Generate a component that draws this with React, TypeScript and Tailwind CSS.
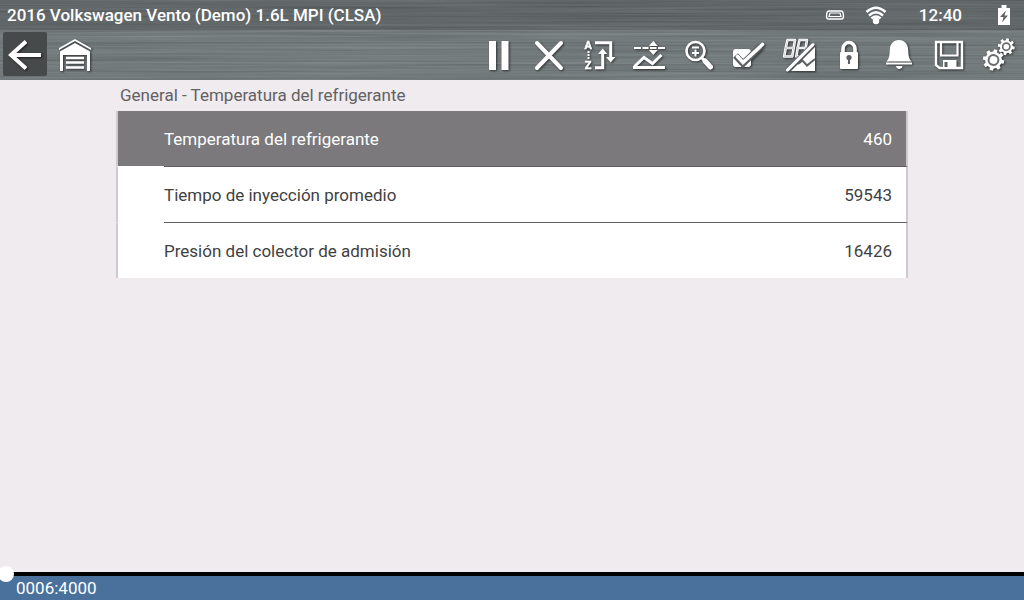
import React, { useState } from 'react';

interface IconButtonProps {
  label: string;
  active?: boolean;
  children: React.ReactNode;
}

interface Parameter {
  id: string;
  name: string;
  value: number;
}

const parameters: Parameter[] = [
  { id: 'coolant', name: 'Temperatura del refrigerante', value: 460 },
  { id: 'injection', name: 'Tiempo de inyección promedio', value: 59543 },
  { id: 'manifold', name: 'Presión del colector de admisión', value: 16426 },
];

const SEGMENTS = 'M13.5 10h7.500l-1.300 8h-8zM11.700 18h8L18.200 26.500h-8zM25.500 10h7.500l-1.300 8h-8zM23.700 18L22.300 26.500h3M31.700 18l-.5 3';

const IconButton: React.FC<IconButtonProps> = ({ label, active, children }) => (
  <button type="button" aria-label={label} className="relative flex size-[50px] items-center justify-center">
    {active && <span className="absolute top-0.5 left-[3px] size-11 rounded-xs bg-[#464a4b]" />}
    <svg
      viewBox="0 0 50 50"
      fill="none"
      stroke="none"
      className="relative size-[50px] text-white drop-shadow-[1px_1px_1px_rgba(0,0,0,0.6)]"
    >
      {children}
    </svg>
  </button>
);

// Brushed metal, stretched behind both header bars
const BrushedMetal: React.FC = () => (
  <svg className="absolute inset-0 size-full" preserveAspectRatio="none" aria-hidden="true">
    <filter id="brushed" x="0" y="0" width="100%" height="100%" colorInterpolationFilters="sRGB">
      <feTurbulence type="fractalNoise" baseFrequency="0.004 0.45" numOctaves="3" seed="8" />
      <feColorMatrix values="0.5 0 0 0 0.215  0.5 0 0 0 0.24  0.5 0 0 0 0.25  0 0 0 0 1" />
    </filter>
    <rect width="100%" height="100%" filter="url(#brushed)" opacity="0.3" />
  </svg>
);

// Toothed wheel around the origin
const gearPath = (outer: number, inner: number, teeth: number) => {
  const points: string[] = [];
  for (let i = 0; i < teeth; i++) {
    const step = (Math.PI * 2) / teeth;
    const a = i * step;
    [[-0.3, inner], [-0.2, outer], [0.2, outer], [0.3, inner]].forEach(([f, r]) => {
      points.push(`${(Math.cos(a + f * step) * r).toFixed(2)} ${(Math.sin(a + f * step) * r).toFixed(2)}`);
    });
  }
  return `M${points.join('L')}Z`;
};

const App: React.FC = () => {
  const [selected, setSelected] = useState('coolant');
  const [frame, setFrame] = useState(0);

  return (
    <div className="flex min-h-screen flex-col overflow-hidden bg-[#efebef] font-['Roboto',sans-serif] text-[17px] leading-7">
      <header className="relative bg-[#72797b] text-white">
        <BrushedMetal />

        {/* --- Status Bar --- */}
        <div className="relative flex h-[30px] items-center justify-between bg-black/15 pr-3.5 pl-[7px]">
          <h1 className="font-medium">2016 Volkswagen Vento (Demo) 1.6L MPI (CLSA)</h1>
          <div className="flex items-center">
            <svg viewBox="0 0 20 10" className="mr-5 h-2.5 w-5" fill="none" stroke="currentColor">
              <path d="M4 1h12q1.500 0 2 1.500l.5 3.500q0 3-2 3h-13q-2 0-2-3l.5-3.500Q2.500 1 4 1z" strokeWidth="1.400" />
              <path d="M5 3h10l1 3.500H4z" strokeWidth="1.200" />
            </svg>
            <svg viewBox="0 0 22 20" className="mr-8 h-5 w-[22px]" fill="none" stroke="currentColor" strokeWidth="2.400">
              <path d="M1.500 7Q11-1.500 20.500 7M4 10.500Q11 4 18 10.500M6.500 13.500Q11 9.500 15.500 13.500" />
              <circle cx="11" cy="16" r="3.200" fill="currentColor" stroke="none" />
            </svg>
            <time className="mr-9 font-medium">12:40</time>
            <svg viewBox="0 0 12 20" className="h-5 w-3">
              <path d="M3.500 0h5v3H12v17H0V3h3.500z" fill="currentColor" />
              <path d="M8 5.500L2 12h3.500L4 17.500 10 10.500H6.500z" fill="#5f6466" />
            </svg>
          </div>
        </div>

        {/* --- Toolbar --- */}
        <nav className="relative flex h-[50px] justify-between">
          <div className="flex">
            <IconButton label="Atrás" active>
              <path d="M26 11.500L11 25l15 13.500M11 25h30" stroke="currentColor" strokeWidth="4" />
            </IconButton>
            <IconButton label="Inicio">
              <path d="M9 20v-2l16-9 16 9v2l-16-9z" fill="currentColor" />
              <path d="M10 41V21.500L25 13l15 8.500V41h-3V25H13v16z" fill="currentColor" />
              <path d="M16 28h18M16 32.500h18M16 37.500h18" stroke="currentColor" strokeWidth="2.300" />
            </IconButton>
          </div>

          <div className="flex">
            <IconButton label="Pausa">
              <path d="M15 11h7v29h-7zM27.500 11h7v29h-7z" fill="currentColor" />
            </IconButton>
            <IconButton label="Borrar">
              <path d="M13 13l24 25M37 13L13 38" stroke="currentColor" strokeWidth="4" strokeLinecap="round" />
            </IconButton>
            <IconButton label="Ordenar">
              <g fill="currentColor" stroke="currentColor" strokeWidth="0.400" fontSize="11" fontWeight="700">
                <text x="10.500" y="19">A</text>
                <text x="10.800" y="39">Z</text>
              </g>
              <path d="M13.500 21h2v2h-2zM13.500 24h2v2h-2zM13.500 27h2v2h-2z" fill="currentColor" />
              <path d="M21 12.700h15.700V29M21 37.800h7.700V22" stroke="currentColor" strokeWidth="3" />
              <path d="M32 27h9.400l-4.700 5.500zM24 24h9.400l-4.700-5.500z" fill="currentColor" />
            </IconButton>
            <IconButton label="Escala">
              <path d="M10 18h7M18.500 18h6M34 18h7M26 18h6.500" stroke="currentColor" strokeWidth="2" />
              <path d="M29.300 11l4.500 5H25zM25 20h8.800l-4.500 5z" fill="currentColor" />
              <path d="M10.500 36.500L20 27.500l8.500 6L37.500 25" stroke="currentColor" strokeWidth="3" />
              <path d="M9 36h32v3H9z" fill="currentColor" />
            </IconButton>
            <IconButton label="Zoom">
              <circle cx="21.500" cy="21" r="9" stroke="currentColor" strokeWidth="2.600" />
              <path d="M18 17.500h7M18 23h7M21.500 19.500v7" stroke="currentColor" strokeWidth="2" />
              <path d="M28 28l3 3" stroke="currentColor" strokeWidth="3" />
              <path d="M31 31l5.500 6" stroke="currentColor" strokeWidth="5" strokeLinecap="round" />
            </IconButton>
            <IconButton label="Seleccionar">
              <rect x="9" y="19" width="18" height="18" rx="3" fill="currentColor" />
              <path d="M11.500 25.500l7.500 8L37 16" stroke="#5b6062" strokeWidth="6.500" />
              <path d="M13.500 26.500l5.500 6L38.500 14.500" stroke="currentColor" strokeWidth="3.600" strokeLinecap="round" />
            </IconButton>
            <IconButton label="Vista">
              <path d={SEGMENTS} stroke="currentColor" strokeWidth="2.600" strokeLinejoin="round" />
              <path d={SEGMENTS} stroke="#9a9ea0" strokeWidth="0.400" />
              <path d="M41 17v24H17z" fill="currentColor" />
              <path d="M24 34l4.500-3.500 4.500 5 8-6.500" stroke="#5b6062" strokeWidth="2" />
              <path d="M14 39.500L39 14.500" stroke="#676d70" strokeWidth="5" />
              <path d="M13.500 40L39 14.500" stroke="currentColor" strokeWidth="3" strokeLinecap="round" />
            </IconButton>
            <IconButton label="Bloquear">
              <path d="M19 24v-5a6 6.500 0 0 1 12 0v5" stroke="currentColor" strokeWidth="3.600" />
              <rect x="16" y="22" width="18" height="17" rx="1" fill="currentColor" />
              <circle cx="25" cy="27.500" r="2.600" fill="#5b6062" />
              <path d="M24 28h2v6h-2z" fill="#5b6062" />
            </IconButton>
            <IconButton label="Alarma">
              <path d="M25 10c6 0 9 4.500 9.200 10 .2 6 .8 9 3.300 11.500h-25c2.500-2.500 3.100-5.500 3.300-11.500C16 14.500 19 10 25 10z" fill="currentColor" />
              <path d="M12 32.500h26v2H12zM22 36h6.500q-.5 3-3.250 3T22 36z" fill="currentColor" />
            </IconButton>
            <IconButton label="Guardar">
              <path d="M12 12h26v26H15.500L12 35z" stroke="currentColor" strokeWidth="2.400" />
              <path d="M17 12v13.500h16.500V12" stroke="currentColor" strokeWidth="2.200" />
              <path d="M19 30h13.500v8H19z" fill="currentColor" />
              <path d="M20.500 32h3v5h-3z" fill="#5b6062" />
            </IconButton>
            <IconButton label="Configuración">
              <g transform="translate(19.500 30) rotate(12)">
                <path d={gearPath(10.8, 8.4, 8)} fill="currentColor" />
                <circle r="4.900" stroke="#676d70" strokeWidth="2" />
              </g>
              <g transform="translate(32.300 16.700) rotate(10)">
                <path d={gearPath(8.5, 6.4, 8)} fill="currentColor" />
                <circle r="3.600" stroke="#676d70" strokeWidth="1.700" />
              </g>
            </IconButton>
          </div>
        </nav>
      </header>

      {/* --- Parameter List --- */}
      <main className="flex-1 px-29">
        <h2 className="h-[31px] pl-1 leading-[30px] text-[#636163]">General - Temperatura del refrigerante</h2>
        <table className="w-full border-separate border-spacing-0 bg-white text-[#424142]">
          <tbody>
            {parameters.map(({ id, name, value }, index) => {
              const isLast = index === parameters.length - 1;
              const line = isLast ? 'h-[55px]' : 'h-14 border-b border-b-[#5f5d5f]';
              return (
                <tr
                  key={id}
                  onClick={() => setSelected(id)}
                  className={selected === id ? 'bg-[#7b797b] text-white' : ''}
                >
                  <td className={`w-12 border-l-2 border-l-[#cecbce] p-0 ${isLast ? '' : 'border-b border-b-white'}`} />
                  <th scope="row" className={`p-0 text-left font-normal ${line}`}>{name}</th>
                  <td className={`border-r-2 border-r-[#cecbce] p-0 pr-3.5 text-right ${line}`}>{value}</td>
                </tr>
              );
            })}
          </tbody>
        </table>
      </main>

      {/* --- Playback Position --- */}
      <footer className="relative bg-[#4a719c] text-white">
        <div className="h-1 bg-black">
          <input
            type="range"
            aria-label="Posición"
            min={0}
            max={4000}
            value={frame}
            onChange={(e) => setFrame(Number(e.target.value))}
            className="absolute -inset-x-0.5 -top-1.5 h-4 appearance-none bg-transparent [&::-webkit-slider-thumb]:size-4 [&::-webkit-slider-thumb]:appearance-none [&::-webkit-slider-thumb]:rounded-full [&::-webkit-slider-thumb]:bg-white"
          />
        </div>
        <p className="pl-4 leading-6">0006:4000</p>
      </footer>
    </div>
  );
};

export default App;
